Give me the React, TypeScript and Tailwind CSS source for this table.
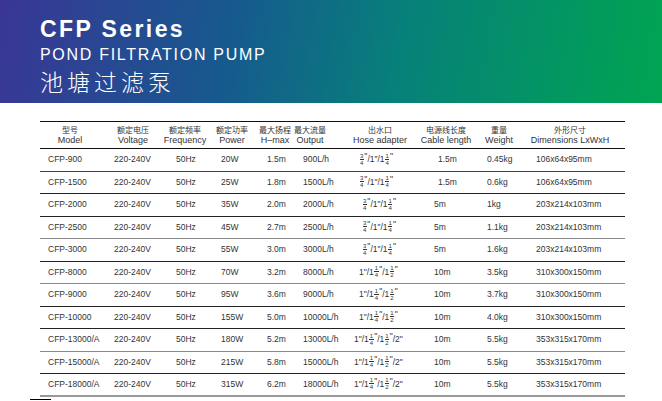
import React from "react";

type Row = {
  model: string;
  voltage: string;
  freq: string;
  power: string;
  hmax: string;
  output: string;
  hose: "a" | "b" | "c";
  hosePad: string;
  cable: string;
  cablePad: string;
  weight: string;
  dims: string;
  line: string;
};

const rows: Row[] = [
  { model: "CFP-900", voltage: "220-240V", freq: "50Hz", power: "20W", hmax: "1.5m", output: "900L/h", hose: "a", hosePad: "pl-[29px]", cable: "1.5m", cablePad: "pl-[8px]", weight: "0.45kg", dims: "106x64x95mm", line: "border-[#444]" },
  { model: "CFP-1500", voltage: "220-240V", freq: "50Hz", power: "25W", hmax: "1.8m", output: "1500L/h", hose: "a", hosePad: "pl-[29px]", cable: "1.5m", cablePad: "pl-[8px]", weight: "0.6kg", dims: "106x64x95mm", line: "border-[#222]" },
  { model: "CFP-2000", voltage: "220-240V", freq: "50Hz", power: "35W", hmax: "2.0m", output: "2000L/h", hose: "a", hosePad: "pl-[32px]", cable: "5m", cablePad: "pl-[4px]", weight: "1kg", dims: "203x214x103mm", line: "border-[#222]" },
  { model: "CFP-2500", voltage: "220-240V", freq: "50Hz", power: "45W", hmax: "2.7m", output: "2500L/h", hose: "a", hosePad: "pl-[32px]", cable: "5m", cablePad: "pl-[4px]", weight: "1.1kg", dims: "203x214x103mm", line: "border-[#888]" },
  { model: "CFP-3000", voltage: "220-240V", freq: "50Hz", power: "55W", hmax: "3.0m", output: "3000L/h", hose: "a", hosePad: "pl-[32px]", cable: "5m", cablePad: "pl-[4px]", weight: "1.6kg", dims: "203x214x103mm", line: "border-[#222]" },
  { model: "CFP-8000", voltage: "220-240V", freq: "50Hz", power: "70W", hmax: "3.2m", output: "8000L/h", hose: "b", hosePad: "pl-[29px]", cable: "10m", cablePad: "pl-[4px]", weight: "3.5kg", dims: "310x300x150mm", line: "border-[#888]" },
  { model: "CFP-9000", voltage: "220-240V", freq: "50Hz", power: "95W", hmax: "3.6m", output: "9000L/h", hose: "b", hosePad: "pl-[29px]", cable: "10m", cablePad: "pl-[4px]", weight: "3.7kg", dims: "310x300x150mm", line: "border-[#222]" },
  { model: "CFP-10000", voltage: "220-240V", freq: "50Hz", power: "155W", hmax: "5.0m", output: "10000L/h", hose: "b", hosePad: "pl-[29px]", cable: "10m", cablePad: "pl-[4px]", weight: "4.0kg", dims: "310x300x150mm", line: "border-[#222]" },
  { model: "CFP-13000/A", voltage: "220-240V", freq: "50Hz", power: "180W", hmax: "5.2m", output: "13000L/h", hose: "c", hosePad: "pl-[24px]", cable: "10m", cablePad: "pl-[4px]", weight: "5.5kg", dims: "353x315x170mm", line: "border-[#888]" },
  { model: "CFP-15000/A", voltage: "220-240V", freq: "50Hz", power: "215W", hmax: "5.8m", output: "15000L/h", hose: "c", hosePad: "pl-[24px]", cable: "10m", cablePad: "pl-[4px]", weight: "5.5kg", dims: "353x315x170mm", line: "border-[#222]" },
  { model: "CFP-18000/A", voltage: "220-240V", freq: "50Hz", power: "315W", hmax: "6.2m", output: "18000L/h", hose: "c", hosePad: "pl-[24px]", cable: "10m", cablePad: "pl-[4px]", weight: "5.5kg", dims: "353x315x170mm", line: "border-[#999] border-b-2" },
];

const heads = [
  ["型号", "Model"],
  ["额定电压", "Voltage"],
  ["额定频率", "Frequency"],
  ["额定功率", "Power"],
  ["最大扬程", "H–max"],
  ["最大流量", "Output"],
  ["出水口", "Hose adapter"],
  ["电源线长度", "Cable length"],
  ["重量", "Weight"],
  ["外形尺寸", "Dimensions LxWxH"],
];

const cols =
  "grid grid-cols-[60px_66px_38px_56px_30px_40px_100px_32px_74px_68px_1fr]";

function Frac({ n, d }: { n: string; d: string }) {
  return (
    <span className="inline-flex flex-col items-center align-middle text-[6px] leading-[6px] mx-[0.5px] -mt-[2px]">
      <span className="border-b border-[#333] px-[0.5px]">{n}</span>
      <span>{d}</span>
    </span>
  );
}

const Q = () => <span className="relative -top-[3px]">"</span>;

function Hose({ kind }: { kind: Row["hose"] }) {
  if (kind === "a")
    return (
      <>
        <Frac n="3" d="4" />
        <Q />
        /1"/1
        <Frac n="1" d="4" />
        <Q />
      </>
    );
  if (kind === "b")
    return (
      <>
        1"/1
        <Frac n="1" d="4" />
        <Q />
        /1
        <Frac n="1" d="2" />
        <Q />
      </>
    );
  return (
    <>
      1"/1
      <Frac n="1" d="4" />
      <Q />
      /1
      <Frac n="1" d="2" />
      <Q />
      /2"
    </>
  );
}

export default function App() {
  return (
    <div className="w-[662px] h-[401px] bg-white overflow-hidden font-['Liberation_Sans',Arial,sans-serif]">
      <div className="h-[103px] bg-[linear-gradient(100deg,#3a3696_0%,#165a8e_35%,#07807a_60%,#00a551_100%)] pl-[40px] pt-[17px] text-white">
        <h1 className="text-[23px] leading-[24px] font-bold tracking-[2.4px]">CFP Series</h1>
        <p className="text-[16px] leading-[18px] tracking-[1.7px] mt-[5px]">POND FILTRATION PUMP</p>
        <p className="text-[23px] leading-[23px] tracking-[4px] font-light font-['Noto_Sans_CJK_SC',sans-serif] mt-[6px]">池塘过滤泵</p>
      </div>

      <div className="ml-[40px] mt-[18px] w-[585px] text-[#333]">
        <div className={`${cols} h-[28px] items-center border-t border-b border-[#111]`}>
          {heads.map(([zh, en]) => (
            <div key={en} className="flex flex-col items-center whitespace-nowrap">
              <span className="text-[8px] leading-[10px] font-['Noto_Sans_CJK_SC',sans-serif]">{zh}</span>
              <span className="text-[9px] leading-[10px]">{en}</span>
            </div>
          ))}
          <div />
        </div>

        {rows.map((r) => (
          <div
            key={r.model}
            className={`${cols} h-[22.5px] items-center border-b whitespace-nowrap text-[8.5px] ${r.line}`}
          >
            <div className="pl-[8px]">{r.model}</div>
            <div className="pl-[14px]">{r.voltage}</div>
            <div className="pl-[10px]">{r.freq}</div>
            <div className="pl-[17px]">{r.power}</div>
            <div className="pl-[7px]">{r.hmax}</div>
            <div className="pl-[13px]">{r.output}</div>
            <div className={r.hosePad}>
              <Hose kind={r.hose} />
            </div>
            <div className={r.cablePad}>{r.cable}</div>
            <div className="pl-[25px]">{r.weight}</div>
            <div>{r.dims}</div>
            <div />
          </div>
        ))}
      </div>
      <div className="ml-[30px] mt-[2px] w-[21px] h-px bg-black" />
    </div>
  );
}
